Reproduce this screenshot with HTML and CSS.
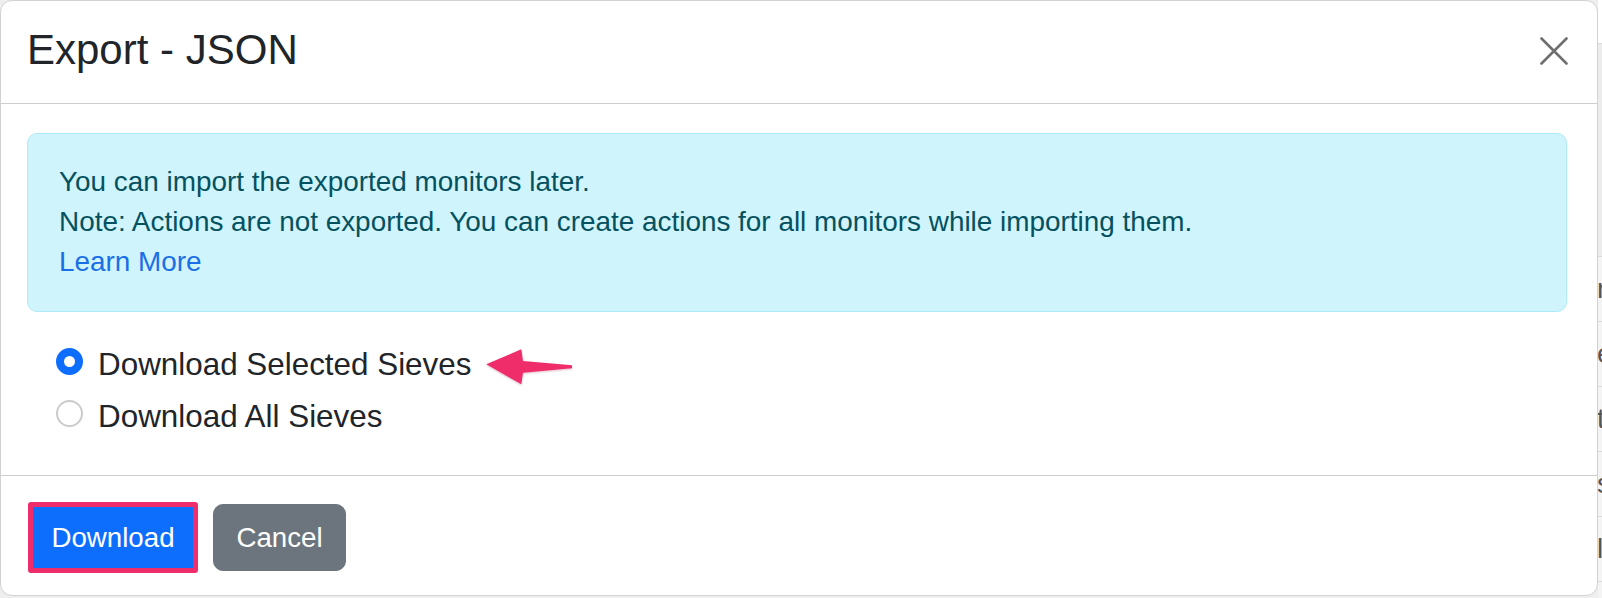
FILE: index.html
```html
<!DOCTYPE html>
<html lang="en">
<head>
<meta charset="utf-8">
<title>Export - JSON</title>
<link rel="stylesheet" href="styles.css">
</head>
<body>
<div class="page">
  <div class="modal">
    <div class="modal-header">
      <h1 class="modal-title">Export - JSON</h1>
      <button class="btn-close" type="button" aria-label="Close">
        <svg width="28" height="28" viewBox="0 0 28 28"><path d="M1.5 1.5 L26.5 26.5 M26.5 1.5 L1.5 26.5" stroke="#6f6f6f" stroke-width="2.6" stroke-linecap="round" fill="none"/></svg>
      </button>
    </div>
    <div class="modal-body">
      <div class="alert">
        <div>You can import the exported monitors later.</div>
        <div>Note: Actions are not exported. You can create actions for all monitors while importing them.</div>
        <a class="alert-link" href="#">Learn More</a>
      </div>
      <div class="options">
        <label class="form-check">
          <span class="radio checked"></span>
          <span class="check-label">Download Selected Sieves</span>
        </label>
        <label class="form-check">
          <span class="radio"></span>
          <span class="check-label">Download All Sieves</span>
        </label>
      </div>
    </div>
    <div class="modal-footer">
      <button class="btn btn-primary" type="button">Download</button>
      <button class="btn btn-secondary" type="button">Cancel</button>
    </div>
    <svg class="annot-arrow" width="92" height="44" viewBox="0 0 92 44">
      <polygon points="3.3,19.3 38.3,4.3 40,16 89,20.3 89,23.3 40,27.7 38.3,39.3" fill="#ef2d6b"/>
    </svg>
  </div>
  <div class="behind">
    <div class="b-row b-top"></div>
    <div class="b-row b-head"></div>
    <div class="b-row">n</div>
    <div class="b-row">e</div>
    <div class="b-row">t</div>
    <div class="b-row">s</div>
    <div class="b-row">l</div>
  </div>
</div>
</body>
</html>
```
FILE: styles.css
```css
* { box-sizing: border-box; }
html, body { margin: 0; padding: 0; }
body {
  font-family: "Liberation Sans", Arial, Helvetica, sans-serif;
  background: #eeeeee;
  width: 1602px;
  height: 598px;
  overflow: hidden;
}
.page {
  display: flex;
  align-items: flex-start;
  width: 1602px;
  height: 598px;
}
.modal {
  position: relative;
  width: 1598px;
  flex: none;
  background: #ffffff;
  border: 1px solid #d2d2d2;
  border-radius: 12px;
}
.modal-header {
  height: 103px;
  display: flex;
  align-items: flex-start;
  justify-content: space-between;
  padding: 24px 29px 0 26px;
  border-bottom: 1px solid #cdcdcd;
}
.modal-title {
  margin: 0;
  font-size: 42px;
  line-height: 50px;
  font-weight: 400;
  color: #212529;
}
.btn-close {
  margin-top: 12px;
  width: 28px;
  height: 28px;
  padding: 0;
  border: 0;
  background: transparent;
  display: block;
}
.btn-close svg { display: block; }
.modal-body {
  padding: 29px 30px 35px 26px;
}
.alert {
  background: #cff4fc;
  border: 1px solid #aeeaf7;
  border-radius: 10px;
  color: #055160;
  font-size: 27.9px;
  line-height: 40px;
  padding: 28px 30px 29px 31px;
  margin-bottom: 29px;
}
.alert-link {
  color: #1a6fe6;
  text-decoration: none;
}
.options {
  display: flex;
  flex-direction: column;
  gap: 5px;
  padding-left: 29px;
}
.form-check {
  display: flex;
  align-items: flex-start;
  height: 47px;
}
.radio {
  width: 27px;
  height: 27px;
  margin-top: 7px;
  margin-right: 15px;
  flex: none;
  border-radius: 50%;
  border: 2px solid #cbcbcb;
  background: #ffffff;
}
.radio.checked {
  border: 8.5px solid #0d6efd;
}
.check-label {
  font-size: 31.4px;
  line-height: 47px;
  color: #212529;
}
.modal-footer {
  display: flex;
  align-items: center;
  gap: 15px;
  padding: 26px 27px 22px 27px;
  border-top: 1px solid #cdcdcd;
}
.btn {
  font-family: "Liberation Sans", Arial, Helvetica, sans-serif;
  font-size: 27.7px;
  line-height: 41px;
  color: #ffffff;
  text-align: center;
  padding: 0;
}
.btn-primary {
  width: 170px;
  height: 71px;
  background: #0d6efd;
  border: 5px solid #ef2d6b;
  border-radius: 3px;
}
.btn-secondary {
  width: 133px;
  height: 67px;
  background: #6c757d;
  border: 1px solid #6c757d;
  border-radius: 10px;
}
.annot-arrow {
  position: absolute;
  left: 482px;
  top: 344px;
  filter: drop-shadow(0 1px 1px rgba(120, 0, 40, 0.25));
}
.behind {
  width: 4px;
  flex: none;
  height: 598px;
  overflow: hidden;
  background: #f4f4f4;
  font-size: 28px;
  color: #555555;
}
.b-row {
  height: 65px;
  line-height: 64px;
  border-bottom: 1px solid #d9d9d9;
  margin-left: -1px;
  white-space: nowrap;
}
.b-top { height: 44px; background: #ffffff; }
.b-head { height: 213px; background: #ececec; }
```
